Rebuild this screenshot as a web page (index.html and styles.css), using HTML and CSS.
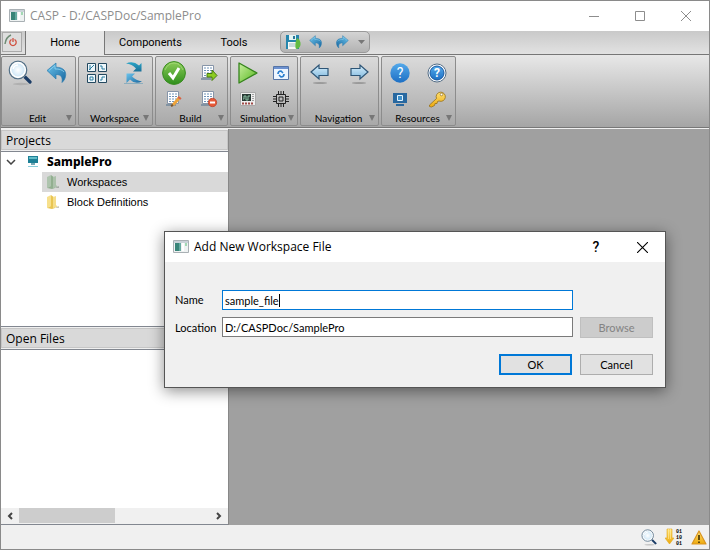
FILE: index.html
```html
<!DOCTYPE html>
<html lang="en">
<head>
<meta charset="utf-8">
<title>CASP - D:/CASPDoc/SamplePro</title>
<link rel="stylesheet" href="styles.css">
</head>
<body>
<svg class="defs" aria-hidden="true">
  <defs>
    <linearGradient id="blue" x1="0" y1="0" x2="1" y2="1"><stop offset="0" stop-color="#6cc4ec"/><stop offset="1" stop-color="#17669f"/></linearGradient>
    <linearGradient id="teal" x1="0" y1="0" x2="0" y2="1"><stop offset="0" stop-color="#2aa6c8"/><stop offset="1" stop-color="#1b6f98"/></linearGradient>
    <linearGradient id="green" x1="0" y1="0" x2="0" y2="1"><stop offset="0" stop-color="#8ccc58"/><stop offset="1" stop-color="#2f8f1c"/></linearGradient>
    <linearGradient id="lime" x1="0" y1="0" x2="1" y2="1"><stop offset="0" stop-color="#c9f0a0"/><stop offset="1" stop-color="#55b61c"/></linearGradient>
    <linearGradient id="sky" x1="0" y1="0" x2="0" y2="1"><stop offset="0" stop-color="#d8effc"/><stop offset="1" stop-color="#7fb8de"/></linearGradient>
    <linearGradient id="help" x1="0" y1="0" x2="0" y2="1"><stop offset="0" stop-color="#54a9ea"/><stop offset="1" stop-color="#1d6fc4"/></linearGradient>
    <linearGradient id="gold" x1="0" y1="0" x2="0" y2="1"><stop offset="0" stop-color="#ffe173"/><stop offset="1" stop-color="#eda90c"/></linearGradient>
    <radialGradient id="glass"><stop offset="0" stop-color="#ffffff"/><stop offset="1" stop-color="#c5e2f5"/></radialGradient>
    <symbol id="app" viewBox="0 0 16 14">
      <path d="M.5.5h15v12H.5z" fill="#eef2f2" stroke="#a9b0b4"/><path d="M1 1h14v2H1z" fill="#c9d2d8"/>
      <path d="M2 3h6v8H2z" fill="#388478"/><path d="M6 3h2v8H6z" fill="#65aaa0"/><path d="M9 3h2v8H9z" fill="#fff"/><path d="M12 3h2v3h-2z" fill="#a2d8b4"/>
    </symbol>
    <symbol id="lens" viewBox="0 0 24 26">
      <ellipse cx="13" cy="24" rx="8" ry="1.200" fill="#999" opacity=".5"/>
      <path d="M15.500 15.500 22 22" stroke="#1b3c66" stroke-width="3.200" stroke-linecap="round"/>
      <circle cx="10" cy="10" r="8" fill="url(#glass)" stroke="#fff" stroke-width="3"/>
      <circle cx="10" cy="10" r="8.800" fill="none" stroke="#547086" stroke-width="1.300"/>
      <path d="M5 9q1-4 5-4" fill="none" stroke="#fff" stroke-width="1.500"/>
    </symbol>
    <symbol id="undo" viewBox="0 0 20 22">
      <path d="M0 8.500 9 1v4.200c8 .2 10.500 4.300 9.500 9.300-.5 2.500-1.800 4.500-3.500 6 .8-5-.6-8-6-8V17z" fill="url(#blue)" stroke="#2b7db0" stroke-width=".7"/>
      <path d="M2 8.500 8 3.500V7c4 0 7 .5 9 3" fill="none" stroke="#9bdcf4" opacity=".7"/>
    </symbol>
    <symbol id="sheet" viewBox="0 0 18 18">
      <path d="M2.500 1.500h11v12h-11z" fill="#fff" stroke="#8795a8"/>
      <path d="M4 4h8M4 6.500h8M4 9h8M4 11.500h8" stroke="#6f93b8" stroke-dasharray="2 1"/>
      <path d="M1 15h10" stroke="#71879b" stroke-width="1.500"/>
    </symbol>
    <symbol id="arrow" viewBox="0 0 20 24">
      <ellipse cx="10" cy="22" rx="7" ry="1" fill="#888" opacity=".7"/>
      <path d="M1 11 9 4v3.500h9v7H9V18z" fill="url(#sky)" stroke="#2e5576" stroke-width="1.200"/>
    </symbol>
    <symbol id="folder" viewBox="0 0 14 16">
      <path d="M1 3 5 1v11l-4 2z" fill="#f7e08c"/><path d="M5 1 9 4v10l-3 1-5-1 4-2z" fill="#e9c552"/><path d="m7 3 3-1v9l2 2-5 1z" fill="#f5dd8a"/><path d="m9 14 4-2v2z" fill="#c9c7bd"/>
    </symbol>
  </defs>
</svg>

<header class="titlebar">
  <svg class="app-icon"><use href="#app"/></svg>
  <h1>CASP - D:/CASPDoc/SamplePro</h1>
  <button class="win-btn" aria-label="Minimize"><svg width="10" height="10"><path d="M0 5.500h10"/></svg></button>
  <button class="win-btn" aria-label="Maximize"><svg width="10" height="10"><path d="M.5.5h9v9h-9z"/></svg></button>
  <button class="win-btn" aria-label="Close"><svg width="10" height="10"><path d="m0 0 10 10M10 0 0 10"/></svg></button>
</header>

<nav class="tabs">
  <div class="power-cell"><button class="power" aria-label="Menu"><svg width="18" height="18" viewBox="0 0 18 18" fill="none"><path d="M2 11Q3 4 8 2" stroke="#6e8b74" stroke-width="1.500"/><path d="M8.500 6.500a3.200 3.200 0 1 0 3 0M10 5v4" stroke="#d0503f" stroke-width="1.300"/></svg></button></div>
  <button class="tab active">Home</button>
  <button class="tab">Components</button>
  <button class="tab narrow">Tools</button>
  <div class="quick">
    <button aria-label="Save"><svg width="16" height="16" viewBox="0 0 16 16"><path d="M1 1h13v14H1z" fill="#2686ad"/><path d="M4 1h7v5H4z" fill="#e5f5f5"/><path d="M8 2h2v3H8z" fill="#28789a"/><path d="M3 8h9v7H3z" fill="#f7faf7"/><path d="M4 10h6M4 12h6" stroke="#9bbac3"/><path d="M12 4q4 2 3.500 7-1 4-4.500 4-2-4 1-11" fill="#62bb43"/></svg></button>
    <button aria-label="Undo"><svg width="14" height="14"><use href="#undo"/></svg></button>
    <button aria-label="Redo"><svg class="flip" width="14" height="14"><use href="#undo"/></svg></button>
    <button class="drop" aria-label="More"><svg width="7" height="4"><path d="M0 0h7L3.500 4z" fill="#777"/></svg></button>
  </div>
</nav>

<section class="ribbon">
  <div class="group wide">
    <button aria-label="Find"><svg width="24" height="26"><use href="#lens"/></svg></button>
    <button aria-label="Undo"><svg width="20" height="22"><use href="#undo"/></svg></button>
    <h2>Edit</h2>
  </div>
  <div class="group wide">
    <button aria-label="Blocks"><svg width="22" height="22" viewBox="0 0 22 22" fill="#eef7fb" stroke="#23485f"><path d="M1.500 1.500h8v8h-8zM12.500 1.500h8v8h-8zM1.500 12.500h8v8h-8zM12.500 12.500h8v8h-8z"/><path d="M3 8 8 3M4 3v5M14 4h2v3h3M4 15h3v3H4zM14 18h2v-3h3" fill="none" stroke="#287ca0"/></svg></button>
    <button aria-label="Refresh"><svg width="22" height="24" viewBox="0 0 22 24" fill="url(#teal)"><path d="M3 2.500Q10-1 16 4.500l2.500-2.500v8.500H10l3-3Q9 3 3 2.500"/><path d="M19 20.500Q12 24 7 18.500L3.500 22v-9.500H12l-3 3q4 4 10 5" fill="url(#blue)"/><path d="M1 22.500h19" stroke="#5295b5" stroke-width=".5"/></svg></button>
    <h2>Workspace</h2>
  </div>
  <div class="group">
    <button aria-label="Build"><svg width="24" height="24" viewBox="0 0 24 24"><circle cx="12" cy="12" r="11.400" fill="url(#green)" stroke="#398c20"/><path d="M3 9Q6 2 12 2t9 7" fill="none" stroke="#b6e18e" opacity=".6"/><path d="m7 12 4 5 6-10" fill="none" stroke="#fff" stroke-width="3"/></svg></button>
    <button aria-label="Export"><svg width="18" height="18" viewBox="0 0 18 18"><use href="#sheet"/><path d="M7 9.500h5V6l5 5.500-5 5V13H7z" fill="#8ccc22" stroke="#467c12"/></svg></button>
    <button aria-label="Edit build"><svg width="18" height="18" viewBox="0 0 18 18"><use href="#sheet"/><path d="m8 15 7-8" stroke="#eda33a" stroke-width="3"/><path d="m13 7 3 2" stroke="#d35f4c" stroke-width="2"/><path d="m6 16 2-1" stroke="#78552d" stroke-width="2"/></svg></button>
    <button aria-label="Clean"><svg width="18" height="18" viewBox="0 0 18 18"><use href="#sheet"/><circle cx="12.500" cy="12.500" r="4.200" fill="#e75a38" stroke="#b53e29" stroke-width=".7"/><path d="M10 12.500h5" stroke="#fff" stroke-width="2"/></svg></button>
    <h2>Build</h2>
  </div>
  <div class="group slim">
    <button aria-label="Run"><svg width="20" height="22" viewBox="0 0 20 22"><path d="M1 1v20l18-10z" fill="url(#lime)" stroke="#35841c" stroke-width="1.300" stroke-linejoin="round"/></svg></button>
    <button aria-label="Window"><svg width="16" height="14" viewBox="0 0 16 14"><path d="M.5.500h15v13H.5z" fill="#edf5ff" stroke="#5574a6"/><path d="M1 1h14v2H1z" fill="#6c91d0"/><path d="M5 8q0-3 3-3l2 2M11 8q0 3-3 3l-2-2" fill="none" stroke="#287dce" stroke-width="1.600"/></svg></button>
    <button aria-label="Scope"><svg width="16" height="14" viewBox="0 0 16 14"><path d="M.5.500h15v13H.5z" fill="#eee" stroke="#aaa"/><path d="M2 2h9v7H2z" fill="#293a35"/><path d="M3 7h1V4h2v4h2V4h2" fill="none" stroke="#8cc2a5"/><path d="M13 2v7" stroke="#555" stroke-dasharray="1 1"/><path d="M2 11.500h11" stroke="#a04b48" stroke-width="2" stroke-dasharray="2 1"/></svg></button>
    <button aria-label="Chip"><svg width="16" height="16" viewBox="0 0 16 16" fill="none" stroke="#222"><path d="M3.500 3.500h9v9h-9zM6 6h4v4H6zM5.500 0v3M8 0v3M10.500 0v3M5.500 13v3M8 13v3M10.500 13v3M0 5.500h3M0 8h3M0 10.500h3M13 5.500h3M13 8h3M13 10.500h3"/></svg></button>
    <h2>Simulation</h2>
  </div>
  <div class="group broad">
    <button aria-label="Back"><svg width="20" height="24"><use href="#arrow"/></svg></button>
    <button aria-label="Forward"><svg class="flip" width="20" height="24"><use href="#arrow"/></svg></button>
    <h2>Navigation</h2>
  </div>
  <div class="group wide">
    <button aria-label="Help"><svg width="20" height="20" viewBox="0 0 20 20"><circle cx="10" cy="10" r="9.700" fill="url(#help)"/><text x="10" y="15" class="mark">?</text></svg></button>
    <button aria-label="Support"><svg width="20" height="20" viewBox="0 0 20 20"><circle cx="10" cy="10" r="9" fill="#fff" stroke="#536d86"/><circle cx="10" cy="10" r="7" fill="url(#help)" stroke="#1758a0"/><text x="10" y="14" class="mark bold">?</text></svg></button>
    <button aria-label="Display"><svg width="14" height="13" viewBox="0 0 14 13"><path d="M0 0h14v10H0zM3 11h8v2H3z" fill="#2868a0"/><path d="M4.500 2.500h5v5h-5z" fill="#3f91cc" stroke="#e3f5ff"/></svg></button>
    <button aria-label="License"><svg width="18" height="18" viewBox="0 0 18 18"><path d="M8.500 8.500A4.600 4.600 0 1 1 11 11l-1.500.5-.5 2H7l-.5 2-3 1.500-2-.5v-1.500z" fill="url(#gold)" stroke="#96701c" stroke-width=".8"/><circle cx="13.500" cy="4.500" r="1.300" fill="#fff" stroke="#96701c" stroke-width=".7"/></svg></button>
    <h2>Resources</h2>
  </div>
</section>

<main class="work">
  <aside class="side">
    <section class="dock">
      <h2>Projects</h2>
      <ul class="pane tree">
        <li class="root"><svg width="10" height="6"><path d="m1 1 4 4 4-4" fill="none" stroke="#444" stroke-width="1.500"/></svg><svg width="10" height="12" viewBox="0 0 10 12"><path d="M0 0h10v7H0z" fill="#1d8096"/><path d="M1 1h8v2H1z" fill="#62bdc9"/><path d="M3 7h4v2H3z" fill="#77a9b5"/><path d="M0 10h10v1H0z" fill="#89cdda"/></svg>SamplePro</li>
        <li class="leaf selected"><svg class="muted" width="14" height="16"><use href="#folder"/></svg>Workspaces</li>
        <li class="leaf"><svg width="14" height="16"><use href="#folder"/></svg>Block Definitions</li>
      </ul>
    </section>
    <section class="dock">
      <h2>Open Files</h2>
      <div class="pane files">
        <div class="scroll">
          <button aria-label="Scroll left"><svg width="6" height="8"><path d="M5 1 2 4l3 3"/></svg></button>
          <div class="track"><div class="thumb"></div></div>
          <button aria-label="Scroll right"><svg width="6" height="8"><path d="m1 1 3 3-3 3"/></svg></button>
        </div>
      </div>
    </section>
  </aside>
</main>

<footer class="status">
  <svg width="16" height="17"><use href="#lens"/></svg>
  <svg width="18" height="18" viewBox="0 0 18 18"><path d="M2 1h5v9h2l-4.500 6L0 10h2z" fill="url(#gold)" stroke="#e3a91c" stroke-width=".6"/><path d="M3.500 1v10M5.500 1v10" stroke="#fff0a8" stroke-width=".6"/><g class="bits"><text x="11" y="5">01</text><text x="11" y="11">10</text><text x="11" y="17">01</text></g></svg>
  <svg width="16" height="15" viewBox="0 0 16 15"><path d="m8 1 7 13H1z" fill="url(#gold)" stroke="#d99420" stroke-width="1.200" stroke-linejoin="round"/><path d="M8 5v5M8 11.500v1.500" stroke="#493807" stroke-width="1.700"/></svg>
</footer>

<form class="dialog" role="dialog" aria-labelledby="dialog-title">
  <header class="dialog-bar">
    <svg class="app-icon"><use href="#app"/></svg>
    <h2 id="dialog-title">Add New Workspace File</h2>
    <button type="button" class="win-btn help-btn">?</button>
    <button type="button" class="win-btn" aria-label="Close"><svg width="11" height="11" viewBox="0 0 10 10"><path d="m0 0 10 10M10 0 0 10"/></svg></button>
  </header>
  <div class="fields">
    <label for="name">Name</label>
    <div class="edit focus"><input id="name" value="sample_file"><span class="caret"></span></div>
    <span></span>
    <label for="location">Location</label>
    <div class="edit"><input id="location" value="D:/CASPDoc/SamplePro"></div>
    <button type="button" class="push" disabled>Browse</button>
  </div>
  <div class="actions">
    <button type="button" class="push default">OK</button>
    <button type="button" class="push">Cancel</button>
  </div>
</form>
</body>
</html>
```
FILE: styles.css
```css
* { box-sizing: border-box; }
body {
  margin: 0;
  min-height: 100vh;
  display: flex;
  flex-direction: column;
  position: relative;
  border: 1px solid #8a8a8a;
  background: #f0f0f0;
  color: #000;
  font: 11px/14px Roboto, "Noto Sans", sans-serif;
}
h1, h2, ul { margin: 0; padding: 0; font: inherit; }
svg { display: block; flex: none; }
button { margin: 0; padding: 0; border: 0; background: none; color: inherit; font: inherit; display: flex; align-items: center; justify-content: center; }
.defs { position: absolute; width: 0; height: 0; }
.flip { transform: scaleX(-1); }

.titlebar, .dialog-bar { display: flex; align-items: center; height: 30px; background: #fff; padding-left: 8px; }
.titlebar { color: #8d8d8d; font-size: 12px; }
.titlebar h1, .dialog-bar h2 { flex: 1; margin-left: 5px; font-family: "Open Sans", sans-serif; }
.app-icon { width: 16px; height: 14px; }
.win-btn { width: 46px; height: 30px; }
.win-btn path { fill: none; stroke: currentColor; }

.tabs { display: flex; height: 24px; border-bottom: 1px solid #777; background: linear-gradient(#c9c9c9, #e2e2e2); font-size: 11px; }
.power-cell { width: 25px; height: 24px; padding: 1px; border: solid #777; border-width: 0 1px 1px 0; }
.power { width: 20px; height: 20px; border: 1px solid #aaa; background: #dedede; }
.tab { width: 91px; }
.tab.narrow { width: 76px; }
.tab.active { width: 79px; height: 24px; border-right: 1px solid #777; background: #e6e6e6; }
.quick { display: flex; align-items: center; gap: 4px; height: 22px; margin-left: 8px; padding: 0 4px; border: 1px solid #999; border-radius: 5px; background: linear-gradient(#d4d4d4, #b3b3b3); }
.quick button { width: 22px; height: 19px; }
.quick button:first-child { width: 16px; }
.quick .drop { width: 8px; }

.ribbon { display: flex; gap: 2px; height: 73px; padding: 1px 0; border-bottom: 1px solid #777; background: linear-gradient(#e8e8e8, #a5a5a5); }
.group { display: grid; grid-template: 32px 20px 1fr / 1fr 1fr; width: 73px; height: 70px; border: 1px solid #8c8c8c; border-radius: 2px; background: linear-gradient(#dadada, #a9a9a9); }
.group.wide { width: 75px; }
.group.slim { width: 68px; }
.group.broad { width: 79px; }
.group h2 { grid-area: 3 / 1 / 4 / 3; display: flex; align-items: center; justify-content: center; padding: 2px 12px 0 10px; position: relative; font: 10px/14px Lato, sans-serif; }
.group h2::after { content: ""; position: absolute; right: 3px; border: solid transparent; border-width: 6px 3px 0; border-top-color: #777; }
.mark { fill: #fff; font-size: 14px; text-anchor: middle; }
.mark.bold { font-size: 12px; font-weight: 700; }

.work { flex: 1; display: flex; margin-top: 1px; background: #a0a0a0; }
.side { width: 228px; display: flex; flex-direction: column; background: #f0f0f0; border-right: 1px solid #888; }
.dock { flex: 1; display: flex; flex-direction: column; padding-top: 1px; }
.dock h2 { height: 20px; padding: 2px 4px; border: 1px solid #c6c6c6; background: #d9d9d9; font-size: 12px; line-height: 15px; font-family: "Open Sans", sans-serif; }
.pane { flex: 1; margin-top: 1px; border: solid #828790; border-width: 1px 0; background: #fff; }
.tree { list-style: none; font-family: "Liberation Sans", sans-serif; }
.tree li { display: flex; align-items: center; height: 20px; }
.root { padding-left: 5px; font-family: "Noto Sans", sans-serif; font-size: 12px; font-weight: 800; }
.root svg + svg { margin: 0 9px 0 12px; }
.leaf { margin-left: 41px; padding-left: 4px; gap: 7px; }
.selected { background: #d9d9d9; }
.muted { filter: hue-rotate(60deg) saturate(30%) brightness(85%); }
.files { display: flex; align-items: flex-end; }
.scroll { flex: 1; display: flex; height: 16px; background: #f0f0f0; }
.scroll button { width: 18px; }
.scroll path { fill: none; stroke: #444; stroke-width: 2; }
.track { flex: 1; }
.thumb { width: 50%; height: 15px; background: #cdcdcd; }

.status { height: 24px; display: flex; align-items: center; justify-content: flex-end; gap: 8px; padding-right: 2px; }
.bits { font: 700 5px "Liberation Mono", monospace; }

.dialog { position: absolute; left: 163px; top: 230px; width: 502px; border: 1px solid #555; background: #f0f0f0; box-shadow: 0 3px 14px rgba(0, 0, 0, .45); }
.dialog-bar { font-size: 12px; }
.help-btn { font-size: 14px; font-weight: 500; }
.fields { display: grid; grid-template-columns: 40px 1fr 73px; gap: 7px; align-items: center; padding: 28px 12px 0 10px; font-family: Lato, sans-serif; }
.edit { display: flex; align-items: center; align-self: start; position: relative; height: 20px; border: 1px solid #7a7a7a; background: #fff; }
.edit.focus { border-color: #0078d7; }
.edit input { flex: 1; min-width: 0; border: 0; padding: 1px 2px 0; background: none; outline: 0; color: #000; font: inherit; }
.caret { position: absolute; left: 56px; width: 1px; height: 13px; background: #000; }
.push { width: 73px; height: 21px; border: 1px solid #adadad; background: #e1e1e1; }
.push:disabled { border-color: #bfbfbf; background: #ccc; color: #838383; }
.push.default { border: 2px solid #0078d7; }
.actions { display: flex; justify-content: flex-end; gap: 8px; padding: 16px 12px 12px; font-family: Lato, sans-serif; }
```
